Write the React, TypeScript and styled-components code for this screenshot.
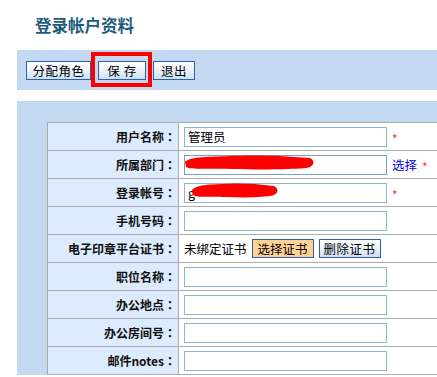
import React from 'react';
import styled, {createGlobalStyle} from "styled-components";

const panelBlue = '#c3d9f1';
const labelBlue = '#dcebfd';
const lineGrey = '#acacac';
const btnBorder = '#2f5fa9';
const cjk = `"Noto Sans CJK SC", "Liberation Sans", sans-serif`;

const Global = createGlobalStyle`
  html, body {
    margin: 0;
    padding: 0;
    background: #fff;
    font-family: ${cjk};
    font-size: 12px;
  }
`;

const Page = styled.div`
  display: flex;
  flex-direction: column;
  width: 437px;
  height: 375px;
  overflow: hidden;
`;

const Header = styled.div`
  height: 50px;
  box-sizing: border-box;
  padding: 14px 0 0 35px;
`;

const Title = styled.h1`
  margin: 0;
  font-size: 16.5px;
  line-height: 22px;
  font-weight: bold;
  color: #1c5b7d;
`;

const Toolbar = styled.div`
  display: flex;
  align-items: flex-start;
  gap: 7px;
  height: 40px;
  margin-left: 17px;
  box-sizing: border-box;
  padding: 11px 0 0 9px;
  background: ${panelBlue};
`;

const Button = styled.button<{ $w: number; $tone?: 'plain' | 'warm' }>`
  width: ${p => p.$w}px;
  height: 19px;
  padding: 0;
  border: 1px solid ${btnBorder};
  background: ${p => p.$tone === 'warm'
    ? '#ffd396'
    : 'linear-gradient(180deg, #ffffff 0%, #eef4fc 45%, #cddff5 100%)'};
  font-family: ${cjk};
  font-size: 12.5px;
  line-height: 17px;
  color: #000;
  letter-spacing: ${p => p.$tone === 'warm' ? 0 : 0.5}px;
`;

const Marked = styled.span`
  position: relative;
  display: inline-flex;

  &::after {
    content: '';
    position: absolute;
    top: -9px;
    bottom: -7px;
    left: -7px;
    right: -6px;
    border: 4px solid #f00;
    pointer-events: none;
  }
`;

const Spacer = styled.div`
  height: 11px;
`;

const Panel = styled.div`
  flex: 1;
  margin-left: 17px;
  padding: 21px 0 0 30px;
  background: ${panelBlue};
  overflow: hidden;
`;

const Form = styled.table`
  border-collapse: collapse;
  width: 440px;
`;

const Row = styled.tr`
  height: 28px;
`;

const Label = styled.td`
  width: 128px;
  padding: 0 2px 0 0;
  border: 1px solid ${lineGrey};
  background: ${labelBlue};
  text-align: right;
  font-weight: bold;
  font-size: 12px;
  color: #111;
  white-space: nowrap;
`;

/* centred full-width colon, as the old bitmap font draws it */
const Colon = styled.span`
  font-family: "Noto Sans CJK TC", ${cjk};
`;

const Value = styled.td`
  padding: 0 0 0 5px;
  border: 1px solid ${lineGrey};
  background: #fff;
  white-space: nowrap;
`;

const Cell = styled.div`
  display: flex;
  align-items: center;
  gap: 5px;
`;

const FieldWrap = styled.span`
  position: relative;
  display: inline-flex;
`;

const Input = styled.input<{ $dim?: boolean }>`
  width: 203px;
  height: 20px;
  box-sizing: border-box;
  margin: 0;
  padding: 0 3px;
  border: 1px solid ${p => p.$dim ? '#7e9ebe' : '#8cb5de'};
  font-family: ${cjk};
  font-size: 12.5px;
  color: #000;
  outline: none;
`;

const Scribble = styled.svg`
  position: absolute;
  left: -1px;
  top: -2px;
  pointer-events: none;
`;

const Req = styled.span`
  color: #f33;
  font-size: 12px;
  align-self: flex-start;
  margin-top: 3px;
`;

const Pick = styled.a`
  color: #0000ee;
  font-size: 12.5px;
  text-decoration: none;
`;

const Plain = styled.span`
  font-size: 12.5px;
  color: #000;
`;

const blob = (w: number) =>
  `M2 9 C 8 3, ${w * 0.2} 4, ${w * 0.35} 3 S ${w * 0.7} 2, ${w - 6} 5 C ${w} 8, ${w - 2} 14, ${w - 10} 15 S ${w * 0.6} 17, ${w * 0.4} 16 S 8 17, 3 14 Z`;

const Redacted: React.FC<{ width: number; offset?: number; value: string }> = ({width, offset = -1, value}) => (
  <FieldWrap>
    <Input readOnly $dim={value === ''} defaultValue={value}/>
    <Scribble width={width} height={20} viewBox={`0 0 ${width} 20`} style={{left: offset}}>
      <path d={blob(width)} fill="#ff0000"/>
    </Scribble>
  </FieldWrap>
);

const FieldLabel: React.FC<{ text: string }> = ({text}) => (
  <Label>{text}<Colon>：</Colon></Label>
);

const fields = ['职位名称', '办公地点', '办公房间号', '邮件notes'];

export default function App() {
  return (
    <Page>
      <Global/>
      <Header>
        <Title>登录帐户资料</Title>
      </Header>
      <Toolbar>
        <Button $w={65}>分配角色</Button>
        <Marked>
          <Button $w={48}>保 存</Button>
        </Marked>
        <Button $w={42}>退出</Button>
      </Toolbar>
      <Spacer/>
      <Panel>
        <Form>
          <tbody>
          <Row>
            <FieldLabel text="用户名称"/>
            <Value>
              <Cell>
                <Input readOnly defaultValue="管理员"/>
                <Req>*</Req>
              </Cell>
            </Value>
          </Row>
          <Row>
            <FieldLabel text="所属部门"/>
            <Value>
              <Cell>
                <Redacted width={133} value=""/>
                <Pick href="#">选择</Pick>
                <Req>*</Req>
              </Cell>
            </Value>
          </Row>
          <Row>
            <FieldLabel text="登录帐号"/>
            <Value>
              <Cell>
                <Redacted width={90} offset={6} value="g"/>
                <Req>*</Req>
              </Cell>
            </Value>
          </Row>
          <Row>
            <FieldLabel text="手机号码"/>
            <Value><Cell><Input readOnly/></Cell></Value>
          </Row>
          <Row>
            <FieldLabel text="电子印章平台证书"/>
            <Value>
              <Cell>
                <Plain>未绑定证书</Plain>
                <Button $w={62} $tone="warm">选择证书</Button>
                <Button $w={62}>删除证书</Button>
              </Cell>
            </Value>
          </Row>
          {fields.map(f => (
            <Row key={f}>
              <FieldLabel text={f}/>
              <Value><Cell><Input readOnly/></Cell></Value>
            </Row>
          ))}
          </tbody>
        </Form>
      </Panel>
    </Page>
  );
}
